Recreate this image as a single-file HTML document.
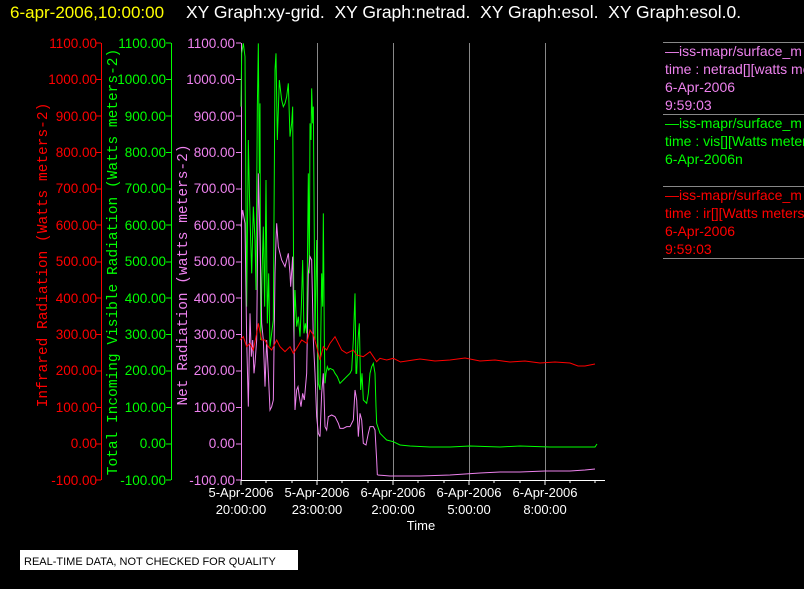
<!DOCTYPE html>
<html><head><meta charset="utf-8"><style>
body{margin:0;background:#000;width:804px;height:589px;overflow:hidden}
svg{display:block}
text{font-family:"Liberation Sans",sans-serif;white-space:pre}
.m{font-family:"Liberation Mono",monospace;font-size:14.5px}
</style></head><body>
<svg width="804" height="589" viewBox="0 0 804 589">
<text x="10" y="18" font-size="17" fill="#ffff00">6-apr-2006,10:00:00</text>
<text x="186" y="18" font-size="17.5" fill="#fff" xml:space="preserve">XY Graph:xy-grid.  XY Graph:netrad.  XY Graph:esol.  XY Graph:esol.0.</text>
<g stroke="#888" stroke-width="1">
<line x1="317.5" y1="43" x2="317.5" y2="480"/><line x1="393.5" y1="43" x2="393.5" y2="480"/>
<line x1="469.5" y1="43" x2="469.5" y2="480"/><line x1="545.5" y1="43" x2="545.5" y2="480"/>
</g>
<g stroke="#f00"><line x1="101.5" y1="43" x2="101.5" y2="480"/></g>
<g stroke="#0f0"><line x1="171.5" y1="43" x2="171.5" y2="480"/></g>
<g stroke="#ee82ee"><line x1="241.5" y1="43" x2="241.5" y2="480"/></g>
<g stroke="#fff"><line x1="241" y1="480.5" x2="605" y2="480.5"/></g>
<text class="m" fill="#f00" transform="translate(47,255) rotate(-90)" text-anchor="middle">Infrared Radiation (Watts meters-2)</text>
<text class="m" fill="#0f0" transform="translate(117,262) rotate(-90)" text-anchor="middle">Total Incoming Visible Radiation (Watts meters-2)</text>
<text class="m" fill="#ee82ee" transform="translate(187,275) rotate(-90)" text-anchor="middle">Net Radiation (watts meters-2)</text>
<g font-size="13" fill="#fff" text-anchor="middle">
<text x="241" y="497">5-Apr-2006</text><text x="241" y="514">20:00:00</text>
<text x="317" y="497">5-Apr-2006</text><text x="317" y="514">23:00:00</text>
<text x="393" y="497">6-Apr-2006</text><text x="393" y="514">2:00:00</text>
<text x="469" y="497">6-Apr-2006</text><text x="469" y="514">5:00:00</text>
<text x="545" y="497">6-Apr-2006</text><text x="545" y="514">8:00:00</text>
<text x="421" y="530">Time</text>
</g>
<g stroke="#fff">
<line x1="241" y1="480" x2="241" y2="485"/><line x1="266" y1="480" x2="266" y2="483"/><line x1="292" y1="480" x2="292" y2="483"/>
<line x1="317" y1="480" x2="317" y2="485"/><line x1="342" y1="480" x2="342" y2="483"/><line x1="368" y1="480" x2="368" y2="483"/>
<line x1="393" y1="480" x2="393" y2="485"/><line x1="418" y1="480" x2="418" y2="483"/><line x1="444" y1="480" x2="444" y2="483"/>
<line x1="469" y1="480" x2="469" y2="485"/><line x1="494" y1="480" x2="494" y2="483"/><line x1="520" y1="480" x2="520" y2="483"/>
<line x1="545" y1="480" x2="545" y2="485"/><line x1="570" y1="480" x2="570" y2="483"/><line x1="595" y1="480" x2="595" y2="483"/>
</g>
<g font-size="13.5" text-anchor="end">
<g fill="#f00">
<text x="97" y="48">1100.00</text><text x="97" y="84">1000.00</text><text x="97" y="121">900.00</text><text x="97" y="157">800.00</text><text x="97" y="193">700.00</text><text x="97" y="230">600.00</text><text x="97" y="266">500.00</text><text x="97" y="303">400.00</text><text x="97" y="339">300.00</text><text x="97" y="375">200.00</text><text x="97" y="412">100.00</text><text x="97" y="448">0.00</text><text x="97" y="485">-100.00</text>
</g>
<g fill="#0f0">
<text x="166" y="48">1100.00</text><text x="166" y="84">1000.00</text><text x="166" y="121">900.00</text><text x="166" y="157">800.00</text><text x="166" y="193">700.00</text><text x="166" y="230">600.00</text><text x="166" y="266">500.00</text><text x="166" y="303">400.00</text><text x="166" y="339">300.00</text><text x="166" y="375">200.00</text><text x="166" y="412">100.00</text><text x="166" y="448">0.00</text><text x="166" y="485">-100.00</text>
</g>
<g fill="#ee82ee">
<text x="235" y="48">1100.00</text><text x="235" y="84">1000.00</text><text x="235" y="121">900.00</text><text x="235" y="157">800.00</text><text x="235" y="193">700.00</text><text x="235" y="230">600.00</text><text x="235" y="266">500.00</text><text x="235" y="303">400.00</text><text x="235" y="339">300.00</text><text x="235" y="375">200.00</text><text x="235" y="412">100.00</text><text x="235" y="448">0.00</text><text x="235" y="485">-100.00</text>
</g>
</g>
<g stroke-width="1">
<path stroke="#f00" d="M96 43h5M96 79.5h5M96 116h5M96 152.5h5M96 189h5M96 225h5M96 262h5M96 298h5M96 334.5h5M96 371h5M96 407.5h5M96 444h5M96 480h5"/>
<path stroke="#0f0" d="M166 43h5M166 79.5h5M166 116h5M166 152.5h5M166 189h5M166 225h5M166 262h5M166 298h5M166 334.5h5M166 371h5M166 407.5h5M166 444h5M166 480h5"/>
<path stroke="#ee82ee" d="M236 43h5M236 79.5h5M236 116h5M236 152.5h5M236 189h5M236 225h5M236 262h5M236 298h5M236 334.5h5M236 371h5M236 407.5h5M236 444h5M236 480h5"/>
</g>
<g transform="translate(240,40) scale(0.33333)" fill="none" stroke-width="3">
<path stroke="#0f0" d="M3 200L5 40L10 10L15 50L20 800L25 300L28 450L32 600L35 700L40 500L45 600L48 750L52 200L55 10L58 400L60 190L62 900L66 700L70 560L74 800L78 420L82 850L86 700L90 920L95 880L100 840L105 90L108 40L112 300L118 120L125 180L130 200L135 190L140 170L145 130L150 290L155 250L158 200L162 900L165 750L170 860L175 830L180 890L184 800L188 660L192 880L196 850L200 880L205 400L208 700L210 250L213 300L215 145L218 250L220 200L223 600L225 900L228 700L230 600L235 1030L240 1050L245 700L248 800L250 520L253 900L255 1030L258 1000L262 980L266 990L270 985L280 990L285 1000L292 1010L300 1030L310 1020L320 1010L330 1000L335 990L340 900L345 760L348 1000L350 1000L354 900L358 850L362 1050L366 1000L370 1080L375 1085L380 1090L385 1060L390 1000L395 980L400 970L405 1000L408 1100L410 1150L420 1180L440 1200L460 1205L480 1215"/>
<path stroke="#ee82ee" d="M3 560L8 510L15 550L20 900L25 1100L30 820L34 950L38 900L42 1000L45 970L50 900L55 400L60 600L65 850L70 900L75 1040L80 900L85 1000L90 1110L95 1100L100 1080L105 700L108 600L110 550L115 620L120 640L125 660L130 670L135 680L140 660L145 640L150 700L152 740L158 650L162 900L165 1110L170 1050L174 1040L178 1070L183 1100L188 1060L193 1080L200 1000L205 700L210 650L215 660L220 900L225 1000L230 1130L235 1180L240 1190L245 1060L250 1000L255 1160L260 1170L265 1130L275 1125L285 1130L295 1150L300 1165L310 1165L320 1160L330 1160L340 1140L345 1050L350 1080L355 1190L360 1120L365 1140L370 1210L378 1215L385 1180L390 1160L395 1160L400 1160L405 1170L410 1260L412 1305"/>
<path stroke="#f00" d="M0 900L10 890L20 920L30 910L40 930L50 880L55 850L65 900L75 900L85 920L95 930L110 900L120 920L135 935L150 920L160 940L170 925L185 900L200 910L210 870L220 885L230 920L240 960L250 920L260 930L270 910L285 890L295 910L305 930L320 940L340 930L350 945L370 950L390 935L400 950L410 965L420 955L440 960L460 955L480 965"/>
</g>
<g fill="none" stroke-width="1">
<path stroke="#f00" d="M400 362L420 359L435 361L450 360L465 358L480 361L495 360L510 362L525 361L540 363L555 362L570 363L578 366L585 366L595 364"/>
<path stroke="#0f0" d="M400 445L410 446L430 447L450 447L470 446L500 447L520 446L550 447L575 447L595 447L597 444"/>
<path stroke="#ee82ee" d="M377.5 475L390 476L420 476L450 475L465 474L480 473L500 472L520 472L545 471L570 471L585 470L595 469"/>
</g>
<g stroke="#888"><line x1="663" y1="42.5" x2="804" y2="42.5"/><line x1="663" y1="114.5" x2="804" y2="114.5"/><line x1="663" y1="186.5" x2="804" y2="186.5"/><line x1="663" y1="258.5" x2="804" y2="258.5"/></g>
<g font-size="14">
<g fill="#ee82ee"><text x="665" y="56">—iss-mapr/surface_m</text><text x="665" y="74">time : netrad[][watts meters</text><text x="665" y="92">6-Apr-2006</text><text x="665" y="110">9:59:03</text></g>
<g fill="#0f0"><text x="665" y="128">—iss-mapr/surface_m</text><text x="665" y="146">time : vis[][Watts meters</text><text x="665" y="164">6-Apr-2006n</text></g>
<g fill="#f00"><text x="665" y="200">—iss-mapr/surface_m</text><text x="665" y="218">time : ir[][Watts meters</text><text x="665" y="236">6-Apr-2006</text><text x="665" y="254">9:59:03</text></g>
</g>
<rect x="20" y="550" width="278" height="20" fill="#fff"/>
<text x="24" y="565" font-size="11" fill="#000">REAL-TIME DATA, NOT CHECKED FOR QUALITY</text>
</svg>
</body></html>
